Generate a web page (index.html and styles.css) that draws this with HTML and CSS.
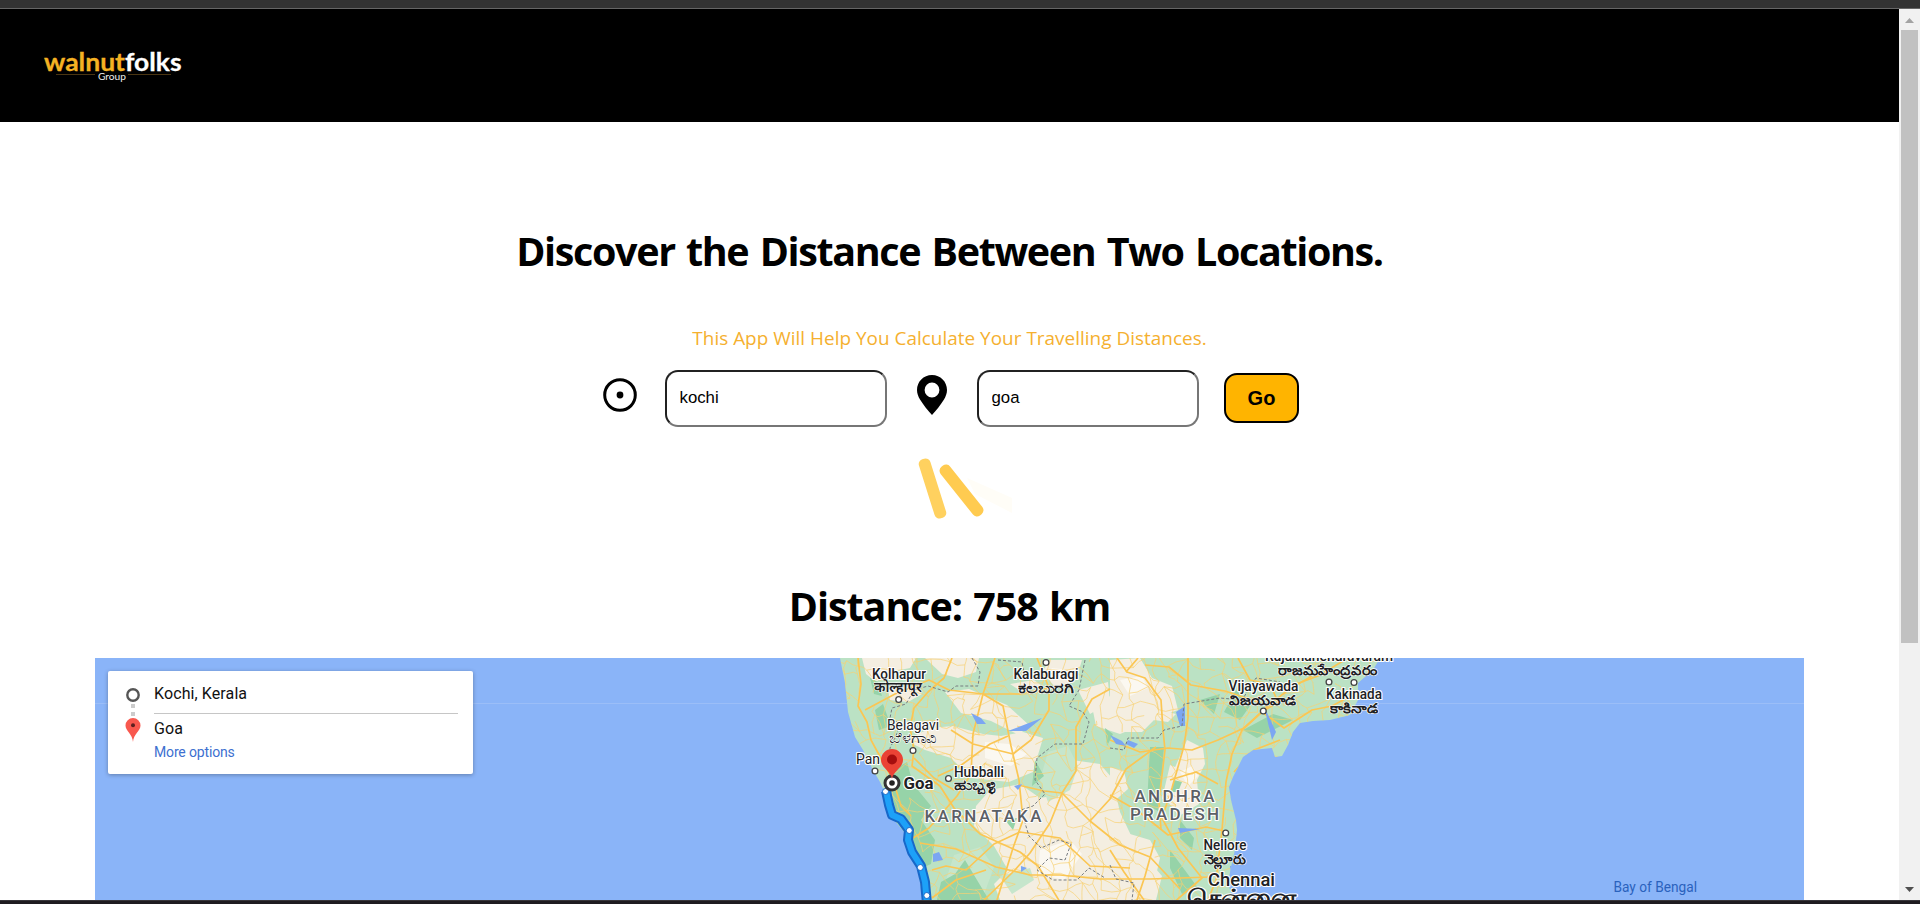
FILE: index.html
```html
<!DOCTYPE html>
<html lang="en">
<head>
<meta charset="utf-8">
<title>Walnutfolks Distance</title>
<link rel="stylesheet" href="styles.css">
</head>
<body>
<div class="window">
  <div class="topbar"></div>
  <div class="view">
    <div class="page">
      <header class="nav">
        <svg class="logo" width="150" height="40" viewBox="40 46 150 40">
          <path d="M56 74.5H95M128 74.5H171" stroke="#4a3512" stroke-width="1"/>
          <text class="brand gold" x="44" y="71" textLength="81" lengthAdjust="spacingAndGlyphs">walnut</text>
          <text class="brand" x="125" y="71" textLength="56.500" lengthAdjust="spacingAndGlyphs">folks</text>
          <text class="group" x="98" y="80" textLength="28" lengthAdjust="spacingAndGlyphs">Group</text>
        </svg>
      </header>
      <main class="main">
        <h1 class="title">Discover the Distance Between Two Locations.</h1>
        <p class="sub">This App Will Help You Calculate Your Travelling Distances.</p>
        <form class="form">
          <svg class="origin" width="34" height="34" viewBox="0 0 34 34"><circle cx="17" cy="17" r="15.300" fill="none" stroke="#000" stroke-width="3"/><circle cx="17" cy="17" r="3.400"/></svg>
          <input class="field from" type="text" value="kochi">
          <svg class="pin" width="30" height="40" viewBox="0 0 30 40"><path fill-rule="evenodd" d="M15 0C6.500 0 0 6.700 0 15c0 3.200 1.200 6.500 3 9.500C6.300 30 11 35.500 15 40c4-4.500 8.700-10 12-15.500 1.800-3 3-6.300 3-9.500C30 6.700 23.500 0 15 0zm0 7.600a7.400 7.400 0 1 1 0 14.800a7.400 7.400 0 0 1 0-14.800z"/></svg>
          <input class="field to" type="text" value="goa">
          <button class="go" type="button">Go</button>
        </form>
        <svg class="loader" width="110" height="70" viewBox="910 455 110 70">
          <path d="M967 478L1012 498V513L975 494Z" fill="#fffdf7"/>
          <rect x="-6" y="-31" width="12" height="62" rx="5" transform="translate(932.5 488.500) rotate(-17.500)" fill="#ffd15f"/>
          <rect x="-6" y="-31" width="12" height="62" rx="5" transform="translate(961.5 490.500) rotate(-38.500)" fill="#ffcb50"/>
        </svg>
        <h2 class="result">Distance: 758 km</h2>
        <section class="map">
          <svg class="canvas" width="1709" height="242" viewBox="95 658 1709 242">
            <defs>
              <clipPath id="land"><path d="M840 658L845 683 848 712 855 737 863 750 873 770 880 782 887 797 892 817 905 833 910 853 918 870 923 900H1233L1228 883 1231 867 1235 850 1237 830 1236 820 1231 800 1229 787 1233 777 1238 767 1243 757 1253 750 1272 748 1275 757 1282 756 1288 745 1293 732 1300 723 1313 721 1330 720 1350 715 1358 700 1358 683 1373 670 1380 658Z"/></clipPath>
            </defs>
            <path d="M95 703.500H1804" stroke="#9bbef8"/>
            <g clip-path="url(#land)">
              <path d="M830 650H1390V900H830Z" fill="#bbe2c4"/>
              <g fill="#f4eee1">
                <path d="M862 658h54l-6 10-20 4-14 10-10-8zM925 658h54l-3 14-18 6-16-4zM888 690l24-4 10 8-14 8-18-2zM945 692l24-3 38 16 22 20-10 10-28-14-30-8zM905 740l26-12 22-2 30 8 18 2 22-4 20 6-10 34-24 10-38-4-20-20-26-8zM990 790l30-6 20 14 24-4 4 30 10 76h-78l-6-16 14-14-14-24-20-20 2-20z"/>
                <path d="M1010 684l24-4 8 6-20 6zM1050 660h32l-6 20-20 8-14-16zM1078 690l30-8 2 20-20 12zM1092 706l44-24 18 18-4 22-30 12-24-8zM1072 760l28 4 12 14 8 34 16 34 26 30-6 24H1050l-4-60 20-50z"/>
                <path d="M1110 660l30-2 12 20 20 8 6 24-22 8-14 14h-26l-6-20zM1160 710l16 4-8 8-14-2zM1187 740l16 8 2 16-8 16 2 24-20 12-14-18 8-26zM1170 765l10 4-8 26-10 4zM1110 767l14 4 4 18-18 16zM1110 828l40 12 10 18-6 26-34 12h-10z"/>
              </g>
              <path d="M1048 752l20-6 10 20-8 24-22 12-8-22zM954 855l26-8 14 20-12 33h-28l-8-20zM1000 876l30-8 4 12-22 14z" fill="#c6e6cc"/>
              <g fill="#fbf8f1"><path d="M985 742l24 2 18 10-16 12-26-8zM1040 850l30-10 12 14-18 26-26-6zM1052 668l18 2-8 10-16-4zM1120 680l22-4 6 12-18 8zM1180 772l12-6 6 10-10 10z"/></g>
              <g fill="#96d3a8">
                <path d="M893 770l14-8 6 22 18 22-10 14 14 20-4 24-18 8-18-22-9-36zM955 874l10-14 12 20 12 20h-52l4-18zM875 710l8-6 8 22-12 4zM870 678l8 4 4 14-8-2z"/>
                <path d="M1150 747h14l-2 26-4 38-11-6zM1174 780l8 2-4 10h-7zM1180 820l14 18-2 12-12-12zM1170 850l28 38-16 6-12-26zM1243 730l30-16 20 6-36 18zM1236 690l14 16-10 14-16-8zM1200 700l20-6-6 20z"/>
                <path d="M1035 760l-3 26 12-10zM1105 728l8 6-6 12zM1005 820l12-2-4 12z"/>
              </g>
              <g id="minor" class="minor"></g>
              <g class="road">
                <path d="M858 658l3 26-3 22 9 16 4 18 12 22 10 18 8 26 10 10M952 658l-8 20-16 14-14 16-4 20 4 22-2 16 28 20 14 22 26 26 40 18 18 14 22 36"/>
                <path d="M995 658l-12 36-10 40-2 40-14 22-28 32-16 10M983 694l20 12 8 40 8 34 4 40-10 28-16 52M983 694l-34-4-20-10-34 14-30 16M1037 658l12 30 0 22-18 30-18 14-40-10-22-14M1049 688l-30 6-36 0"/>
                <path d="M914 758l20 20 20 12M938 776l22-10 30-22 18-8M1018 785l26 6 18 2 28 28 30 24 30 12 30 32M1062 793l14-22 0-44 16-28 18-10M1062 793l-12 30-20 30-16 18-30 29M920 843l36 6 40 18 34 8 30 0 40 4 50 0 60-2"/>
                <path d="M932 870l14-4 20 4 28-26 26-12 40 6 30 28 40 2M932 898l24-18 30-10M1110 740l30 12 28-4 24 2 26-10 26-12 24-22 20-16 24-14"/>
                <path d="M1117 658l10 14 18 6 16 22 2 30 2 20-6 50 2 30M1145 665l24 2 22 18 34 6 36 12M1188 658v60l-4 28-12 42-10 30 16 30 24 30-30 26-10-3"/>
                <path d="M1262 712l16-10-8-18-20-4-12-22M1262 712l-20 18-10 24-6 28-4 48-6 50-8 20M1262 712l22 16 28-18 20-4 26-14M1280 740l-26 10-20 22M1110 795l28 16 30 24 38-8 18 4M1110 850l14 22 20 28M1155 840l-10 36-8 24"/>
                <path d="M1138 658l-12 14M1090 821l20-22 16-30 30-22M1280 690l38-14 30-18M1170 780l26-8 22 12"/>
              </g>
              <path d="M971 713l10 5 5 6-9 0zM1008 731l26-10 8-3-16 13zM933 854l6-2 4 8-10 2zM1110 735l12 6 4 5-10-2zM1128 740l10 4-4 4-8-4zM1176 712l9-6v20h-5zM1178 828l22 1-20 4zM1264 706l12 26-4 8zM1021 866l6 2-6 4zM1014 786l8-2-4 6zM1230 866l12-2-10 14z" fill="#7ba6f2"/>
              <path class="border" d="M972 658l8 14-2 14-22 0-8 6-20-6-14 4-8 14-14 4-2 10 10 6-4 12-6 12 0 26-6 20 6 14-10 10M998 660l24 2 2 10M1085 660l-6 30-10 16 14 6 6 10-6 22-28 0-18 14-2 22 10 14-12 12-12 4 8 26 12 12 18-8 12 4-6 16-16-2-12 12 16 10 24 0 12-12 16 10M1110 748l14 2 4-12 30 0 6-8 18-4 2-22 36-6 22 2 14-22 24 4M1110 865l6 14 18 4-2 17"/>
            </g>
            <g class="route"><path d="M886 791l3 14 3 10 9 4 8 11-1 10 4 12 9 14 4 16 2 22" stroke="#1768c9" stroke-width="10"/><path d="M886 791l3 14 3 10 9 4 8 11-1 10 4 12 9 14 4 16 2 22" stroke="#1da1f8" stroke-width="6"/></g>
            <g fill="#fff" stroke="#1768c9"><circle cx="885.500" cy="791.500" r="3"/><circle cx="909.300" cy="830.500" r="3"/><circle cx="920.300" cy="867.500" r="3"/><circle cx="926.800" cy="895.500" r="3"/></g>
            <g class="towns"><circle cx="898.700" cy="699.500" r="2.900"/><circle cx="913" cy="750.500" r="2.900"/><circle cx="875" cy="771" r="2.900"/><circle cx="948.500" cy="778.500" r="2.900"/><circle cx="1046" cy="662.500" r="2.900"/><circle cx="1263.300" cy="711" r="2.900"/><circle cx="1329" cy="682" r="2.900"/><circle cx="1354" cy="682.500" r="2.900"/><circle cx="1225.700" cy="833" r="2.900"/></g>
            <g class="labels">
              <text class="city" x="872" y="678.500" textLength="54" lengthAdjust="spacingAndGlyphs">Kolhapur</text><text class="indic" x="874" y="691.500" textLength="48" lengthAdjust="spacingAndGlyphs">कोल्हापूर</text>
              <text class="city light" x="887" y="729.500" textLength="52" lengthAdjust="spacingAndGlyphs">Belagavi</text><text class="indic light" x="889" y="743" textLength="48" lengthAdjust="spacingAndGlyphs">ಬೆಳಗಾವಿ</text>
              <text class="city light" x="856" y="764" textLength="24" lengthAdjust="spacingAndGlyphs">Pan</text>
              <text class="city" x="1013.500" y="679" textLength="65" lengthAdjust="spacingAndGlyphs">Kalaburagi</text><text class="indic" x="1018" y="692.500" textLength="56" lengthAdjust="spacingAndGlyphs">ಕಲಬುರಗಿ</text>
              <text class="city" x="954" y="776.500" textLength="50" lengthAdjust="spacingAndGlyphs">Hubballi</text><text class="indic" x="954" y="790" textLength="43" lengthAdjust="spacingAndGlyphs">ಹುಬ್ಬಳ್ಳಿ</text>
              <text class="goa" x="903.500" y="788.500" textLength="30" lengthAdjust="spacingAndGlyphs">Goa</text>
              <text class="state" x="924.500" y="822" textLength="117">KARNATAKA</text>
              <text class="state" x="1134.500" y="802" textLength="80">ANDHRA</text><text class="state" x="1130" y="819.500" textLength="89">PRADESH</text>
              <text class="city" x="1265" y="661" textLength="128" lengthAdjust="spacingAndGlyphs">Rajamahendravaram</text><text class="indic" x="1278" y="675" textLength="100" lengthAdjust="spacingAndGlyphs">రాజమహేంద్రవరం</text>
              <text class="city" x="1228.500" y="690.500" textLength="70" lengthAdjust="spacingAndGlyphs">Vijayawada</text><text class="indic" x="1229" y="704.500" textLength="67" lengthAdjust="spacingAndGlyphs">విజయవాడ</text>
              <text class="city" x="1326" y="699" textLength="56" lengthAdjust="spacingAndGlyphs">Kakinada</text><text class="indic" x="1330" y="713" textLength="48" lengthAdjust="spacingAndGlyphs">కాకినాడ</text>
              <text class="city" x="1203.500" y="849.500" textLength="43" lengthAdjust="spacingAndGlyphs">Nellore</text><text class="indic" x="1203.500" y="863.500" textLength="43" lengthAdjust="spacingAndGlyphs">నెల్లూరు</text>
              <text class="metro tamil" x="1187" y="905" textLength="109" lengthAdjust="spacingAndGlyphs">சென்னை</text><text class="metro" x="1208" y="885.500" textLength="67" lengthAdjust="spacingAndGlyphs">Chennai</text>
              <text class="sea" x="1613.500" y="891.500" textLength="83.500" lengthAdjust="spacingAndGlyphs">Bay of Bengal</text>
            </g>
            <circle cx="892" cy="783" r="7" fill="#fff" stroke="#333" stroke-width="3"/><circle cx="892" cy="783" r="2.800" fill="#222"/>
            <path d="M892 779c-1-8-11-11-11-19a11 11 0 0 1 22 0c0 8-10 11-11 19z" fill="#ea4335"/><circle cx="892" cy="759.500" r="5" fill="#a50e0e"/>
          </svg>
          <div class="card">
            <svg class="steps" width="16" height="56" viewBox="0 0 16 56"><circle cx="8" cy="8" r="5.700" fill="none" stroke="#555" stroke-width="2.400"/><path d="M6 17h4v4H6zM6 25h4v4H6z" fill="#ccc"/><path d="M8 55C7.500 47 .5 44 .5 38.500a7.500 7.500 0 0 1 15 0C15.500 44 8.500 47 8 55z" fill="#f8584e"/><circle cx="8" cy="38.300" r="2" fill="#5b2020"/></svg>
            <div class="places">
              <div class="place first">Kochi, Kerala</div>
              <div class="place second">Goa</div>
              <div class="more">More options</div>
            </div>
          </div>
        </section>
      </main>
    </div>
    <div class="scrollbar">
      <svg width="21" height="21" viewBox="0 0 21 21"><path d="M6 14L10.500 9 15 14z" fill="#a3a3a3"/></svg>
      <div class="thumb"></div>
      <svg class="down" width="21" height="21" viewBox="0 0 21 21"><path d="M6 8L10.500 13 15 8z" fill="#505050"/></svg>
    </div>
  </div>
  <div class="bottombar"></div>
</div>
<script src="roads.js"></script>
</body>
</html>
```
FILE: styles.css
```css
* { box-sizing: border-box; }
body { margin: 0; background: #fff; color: #000; font-family: "Open Sans", "Noto Sans", sans-serif; overflow: hidden; }
.window { width: 1920px; height: 904px; display: flex; flex-direction: column; }
.topbar { height: 9px; flex: none; background: #333; border-bottom: 1px solid #666; }
.bottombar { height: 4px; flex: none; background: #1e1b20; border-top: 1px solid #38363b; }
.view { flex: 1; min-height: 0; display: flex; }
.page { width: 1899px; overflow: hidden; }
.nav { height: 113px; background: #000; padding: 37px 0 0 40px; }
.logo { display: block; }
.brand { font: 700 25.5px Lato, sans-serif; fill: #fff; stroke: #fff; stroke-width: .3px; }
.gold { fill: #f4b223; stroke: #f4b223; }
.group { font: 400 10px Lato, sans-serif; fill: #eee; }
.main { display: flex; flex-direction: column; align-items: center; }
.title { margin: 101px 0 0; height: 56px; font-size: 39.5px; line-height: 56px; font-weight: 700; letter-spacing: -1.37px; word-spacing: 2.4px; white-space: nowrap; }
.sub { margin: 44px 0 0; height: 30px; font-size: 18.9px; line-height: 30px; letter-spacing: .03px; color: #f5b02f; white-space: nowrap; }
.form { margin: 17px 0 0; height: 57px; display: flex; align-items: center; padding-left: 2px; }
.origin { margin: -8px 28px 0 0; }
.field { width: 222px; height: 57px; border: 2px inset #767676; border-radius: 13px; padding: 0 13px 1px; font: 16.8px "Liberation Sans", Arial, sans-serif; color: #000; background: #fff; }
.pin { margin: -7px 30px 0; }
.go { margin: -2px 0 0 25px; width: 75px; height: 50px; background: #ffb400; border: 2px solid #000; border-radius: 13px; font: 700 20px "Liberation Sans", Arial, sans-serif; color: #000; padding: 1px 0 0 1px; }
.loader { margin: 28px 0 0 31px; display: block; }
.result { margin: 53px 0 0; height: 56px; font-size: 39.5px; line-height: 56px; font-weight: 700; letter-spacing: -1.05px; word-spacing: 2px; white-space: nowrap; }
.map { position: relative; width: 1709px; height: 242px; margin-top: 24px; background: #8ab4f8; overflow: hidden; flex: none; }
.canvas { display: block; }
.card { position: absolute; left: 13px; top: 13px; width: 365px; height: 103px; background: #fff; border-radius: 2px; box-shadow: 0 1px 4px rgba(0, 0, 0, .3); display: flex; font-family: Roboto, sans-serif; }
.steps { margin: 16px 0 0 17px; flex: none; }
.places { margin-left: 13px; width: 304px; }
.place { font-size: 16px; line-height: 20px; letter-spacing: .1px; color: #111; }
.first { padding-top: 13px; height: 43px; border-bottom: 1px solid #c6c6c6; }
.second { padding-top: 5px; height: 28px; }
.more { font-size: 14px; line-height: 20px; letter-spacing: -.15px; color: #3d70d0; }
.minor { fill: none; stroke: #f8d172; stroke-width: .7; }
.road { fill: none; stroke: #fbc653; stroke-width: 1.7; stroke-linejoin: round; }
.border { fill: none; stroke: #777c80; stroke-width: 1; stroke-dasharray: 3 2; }
.route { fill: none; stroke-linejoin: round; }
.towns { fill: #fff; stroke: #444; stroke-width: 1.3; }
.labels { font-family: Roboto, "Noto Sans", sans-serif; fill: #202124; stroke: #fff; stroke-width: 2.2px; stroke-linejoin: round; paint-order: stroke; }
.city { font-size: 13.8px; font-weight: 500; }
.indic { font-size: 13.5px; font-weight: 600; stroke-width: 1.2px; }
.light { font-weight: 400; }
.goa { font-size: 16.5px; font-weight: 700; }
.state { font-size: 17px; font-weight: 500; fill: #5b6066; }
.metro { font-size: 18.5px; font-weight: 500; }
.tamil { font-size: 22px; font-weight: 700; }
.sea { font-size: 14px; fill: #2a62bd; stroke: none; }
.scrollbar { width: 21px; background: #f1f1f1; display: flex; flex-direction: column; align-items: center; }
.thumb { width: 17px; height: 613px; background: #c1c1c1; }
.down { margin-top: auto; }
```
FILE: roads.js
```javascript
// Fills the land area with a fine network of secondary roads.
let seed = 7;
const rnd = () => (seed = (seed * 16807) % 2147483647) / 2147483647;
const step = 13, cols = 44, rows = 21, pts = [];
for (let r = 0; r < rows; r++) {
  pts.push([]);
  for (let c = 0; c < cols; c++) {
    pts[r].push([832 + c * step + (rnd() - .5) * 12, 652 + r * step + (rnd() - .5) * 12]);
  }
}
let d = "";
const link = (a, b) => {
  const mx = (a[0] + b[0]) / 2 + (rnd() - .5) * 5, my = (a[1] + b[1]) / 2 + (rnd() - .5) * 5;
  d += `M${a[0].toFixed(1)} ${a[1].toFixed(1)}L${mx.toFixed(1)} ${my.toFixed(1)} ${b[0].toFixed(1)} ${b[1].toFixed(1)}`;
};
for (let r = 0; r < rows - 1; r++) {
  for (let c = 0; c < cols - 1; c++) {
    if (rnd() < .62) link(pts[r][c], pts[r][c + 1]);
    if (rnd() < .62) link(pts[r][c], pts[r + 1][c]);
    if (rnd() < .22) link(pts[r][c], pts[r + 1][c + 1]);
  }
}
const path = document.createElementNS("http://www.w3.org/2000/svg", "path");
path.setAttribute("d", d);
document.getElementById("minor").appendChild(path);
```
